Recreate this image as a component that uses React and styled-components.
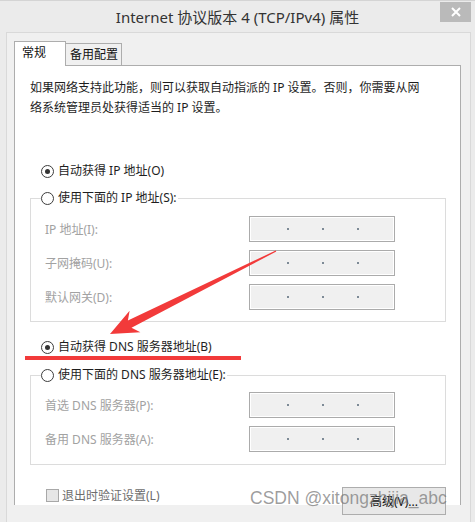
import React from 'react'
import styled, { createGlobalStyle } from 'styled-components'

const GlobalStyle = createGlobalStyle`
  html, body {
    margin: 0;
    padding: 0;
    background: #ebebeb;
  }
  body {
    font-family: "Noto Sans", "Noto Sans CJK SC", sans-serif;
  }
`

const Window = styled.div`
  position: relative;
  width: 475px;
  height: 522px;
  overflow: hidden;
  box-sizing: border-box;
  background: #ebebeb;
  border-top: 1px solid #d4d4d4;
`
const TitleBar = styled.div`
  display: grid;
  grid-template-columns: 1fr auto 1fr;
  align-items: start;
  height: 31px;
`
const Title = styled.div`
  grid-column: 2;
  margin-top: 6px;
  font-size: 15px;
  line-height: 20px;
  color: #333;
  white-space: nowrap;
`
const Close = styled.div`
  justify-self: end;
  width: 31px;
  height: 20px;
  margin: 1px 4px 0 0;
  background: #bababa;
  display: flex;
  align-items: center;
  justify-content: center;
`
const Frame = styled.div`
  margin-left: 6px;
  width: 465px;
  height: 500px;
  box-sizing: border-box;
  padding: 8px 9px 0 7px;
  background: #f0f0f0;
  border: 1px solid #d9d9d9;
  border-bottom: none;
`
const Tabs = styled.div`
  display: flex;
  align-items: flex-end;
  height: 24px;
  font-size: 12px;
  color: #111;
`
const Tab = styled.div`
  position: relative;
  z-index: ${p => (p.$active ? 1 : 0)};
  box-sizing: border-box;
  width: ${p => (p.$active ? '52px' : '56px')};
  height: ${p => (p.$active ? '25px' : '22px')};
  margin-bottom: ${p => (p.$active ? '-1px' : '0')};
  padding: ${p => (p.$active ? '3px 0 0 7px' : '3px 0 0 4px')};
  line-height: 16px;
  background: ${p => (p.$active ? '#fff' : '#f0f0f0')};
  border: 1px solid #adadad;
  border-bottom: none;
  border-left: ${p => (p.$active ? '1px solid #adadad' : 'none')};
`
const Panel = styled.div`
  box-sizing: border-box;
  height: 440px;
  background: #fff;
  border: 1px solid #adadad;
  border-bottom: none;
  font-size: 12px;
  color: #1e1e1e;
`
const Intro = styled.p`
  margin: 12px 0 0 15px;
  width: 400px;
  line-height: 20px;
`
const RadioRow = styled.label`
  display: flex;
  align-items: center;
  gap: 4px;
  height: 16px;
  line-height: 16px;
  margin: ${p => p.$mt}px 0 0 26px;
  white-space: nowrap;
`
const Radio = styled.span`
  position: relative;
  box-sizing: border-box;
  width: 13px;
  height: 13px;
  border-radius: 50%;
  border: 1px solid #3c3c3c;
  background: #fff;
  flex: none;
  &::after {
    content: '';
    display: ${p => (p.$checked ? 'block' : 'none')};
    position: absolute;
    left: 3px;
    top: 3px;
    width: 5px;
    height: 5px;
    border-radius: 50%;
    background: #333;
  }
`
const Group = styled.fieldset`
  margin: ${p => p.$mt}px 14px 0 15px;
  padding: ${p => p.$pt}px 0 ${p => p.$pb}px 0;
  border: 1px solid #dcdcdc;
  min-width: 0;
`
const Legend = styled.legend`
  margin-left: 10px;
  padding: 0 1px 0 0;
  line-height: 16px;
`
const LegendRow = styled.span`
  display: flex;
  align-items: center;
  gap: 4px;
  white-space: nowrap;
`
const Fields = styled.div`
  display: grid;
  grid-template-columns: 204px 146px;
  row-gap: 8px;
  margin-left: 14px;
`
const FieldLabel = styled.span`
  align-self: center;
  color: #a2a2a2;
  white-space: nowrap;
`
const IpBox = styled.div`
  box-sizing: border-box;
  height: 26px;
  display: flex;
  align-items: center;
  gap: 33px;
  padding-left: 37px;
  background: #f0f0f0;
  border: 1px solid #ababab;
  box-shadow: inset 0 0 0 1px #fff;
`
const Dot = styled.span`
  width: 2px;
  height: 2px;
  background: #7d8a96;
`
const Footer = styled.div`
  display: flex;
  justify-content: space-between;
  align-items: flex-start;
  margin: 22px 14px 0 31px;
`
const Check = styled.label`
  display: flex;
  align-items: center;
  gap: 3px;
  margin-top: 2px;
  color: #6d6d6d;
  line-height: 13px;
`
const Box = styled.span`
  box-sizing: border-box;
  width: 13px;
  height: 13px;
  background: #e6e6e6;
  border: 1px solid #a8a8a8;
`
const Button = styled.div`
  box-sizing: border-box;
  width: 104px;
  height: 28px;
  display: flex;
  align-items: center;
  justify-content: center;
  background: #e8e8e8;
  border: 1px solid #adadad;
  color: #111;
`
const Overlay = styled.svg`
  position: absolute;
  left: 0;
  top: 0;
  pointer-events: none;
`
const Watermark = styled.div`
  position: absolute;
  left: 250px;
  top: 486px;
  font-family: "Liberation Sans", Arial, sans-serif;
  font-size: 17.5px;
  line-height: 22px;
  color: rgba(120, 120, 120, 0.72);
  white-space: nowrap;
`

const IpField = () => (
  <IpBox>
    <Dot />
    <Dot />
    <Dot />
  </IpBox>
)

const ipRows = ['IP 地址(I):', '子网掩码(U):', '默认网关(D):']
const dnsRows = ['首选 DNS 服务器(P):', '备用 DNS 服务器(A):']

export default function App() {
  return (
    <>
      <GlobalStyle />
      <Window>
        <TitleBar>
          <Title>Internet 协议版本 4 (TCP/IPv4) 属性</Title>
          <Close>
            <svg width="10" height="10" viewBox="0 0 10 10">
              <path d="M1 1L9 9M9 1L1 9" stroke="#fff" strokeWidth="2" />
            </svg>
          </Close>
        </TitleBar>
        <Frame>
          <Tabs>
            <Tab $active>常规</Tab>
            <Tab>备用配置</Tab>
          </Tabs>
          <Panel>
            <Intro>
              如果网络支持此功能，则可以获取自动指派的 IP 设置。否则，你需要从网络系统管理员处获得适当的 IP 设置。
            </Intro>
            <RadioRow $mt={45}>
              <Radio $checked />
              自动获得 IP 地址(O)
            </RadioRow>
            <Group $mt={11} $pt={10} $pb={11}>
              <Legend>
                <LegendRow>
                  <Radio />
                  使用下面的 IP 地址(S):
                </LegendRow>
              </Legend>
              <Fields>
                {ipRows.map(l => (
                  <React.Fragment key={l}>
                    <FieldLabel>{l}</FieldLabel>
                    <IpField />
                  </React.Fragment>
                ))}
              </Fields>
            </Group>
            <RadioRow $mt={17}>
              <Radio $checked />
              自动获得 DNS 服务器地址(B)
            </RadioRow>
            <Group $mt={12} $pt={9} $pb={12}>
              <Legend>
                <LegendRow>
                  <Radio />
                  使用下面的 DNS 服务器地址(E):
                </LegendRow>
              </Legend>
              <Fields>
                {dnsRows.map(l => (
                  <React.Fragment key={l}>
                    <FieldLabel>{l}</FieldLabel>
                    <IpField />
                  </React.Fragment>
                ))}
              </Fields>
            </Group>
            <Footer>
              <Check>
                <Box />
                退出时验证设置(L)
              </Check>
              <Button>高级(V)...</Button>
            </Footer>
          </Panel>
        </Frame>
        <Overlay width="475" height="522" viewBox="0 0 475 522">
          <rect x="25" y="355" width="216" height="4" fill="#f23a3a" />
          <polygon
            fill="#f23a3a"
            points="110,333 140.4,331.2 131.5,326.8 276.3,250.5 275.7,249.5 127.9,319.6 129.6,309.8"
          />
        </Overlay>
        <Watermark>CSDN @xitongzhijia_abc</Watermark>
      </Window>
    </>
  )
}
